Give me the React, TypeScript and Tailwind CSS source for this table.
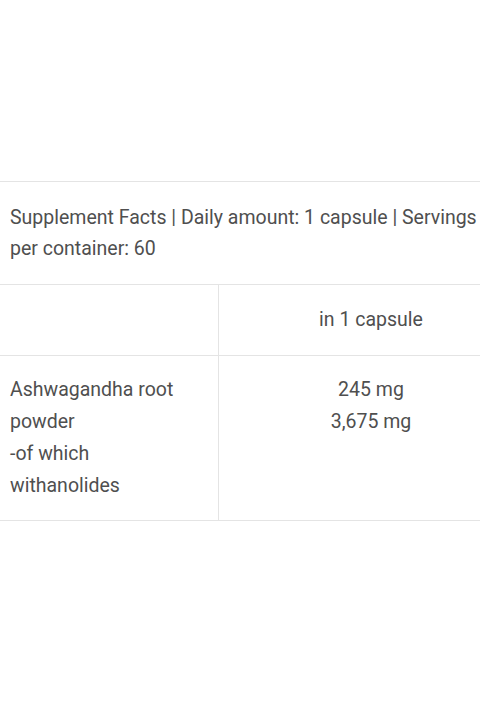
import React from "react";

const App: React.FC = () => {
  return (
    <div className="w-[480px] h-[706px] bg-white overflow-hidden font-['Roboto',sans-serif] text-[19.5px] leading-[31.5px] text-[#4f4f4f]">
      <div className="pt-[181px] w-[523px]">
        {/* caption */}
        <div className="border-t border-[#e4e4e4] w-[482px] pl-[10px] py-[19.5px]">
          Supplement Facts | Daily amount: 1 capsule | Servings per container: 60
        </div>

        {/* table head */}
        <div className="grid grid-cols-[219px_1fr] border-t border-[#e4e4e4]">
          <div className="border-r border-[#e4e4e4] px-[10px] py-[19px]">&nbsp;</div>
          <div className="text-center py-[19px]">in 1 capsule</div>
        </div>

        {/* row */}
        <div className="grid grid-cols-[219px_1fr] border-t border-b border-[#e4e4e4]">
          <div className="border-r border-[#e4e4e4] pl-[10px] pr-[30px] py-[18px] leading-[32px]">
            Ashwagandha root powder
            <br />
            -of which withanolides
          </div>
          <div className="text-center py-[18px] leading-[32px]">
            245 mg
            <br />
            3,675 mg
          </div>
        </div>
      </div>
    </div>
  );
};

export default App;
